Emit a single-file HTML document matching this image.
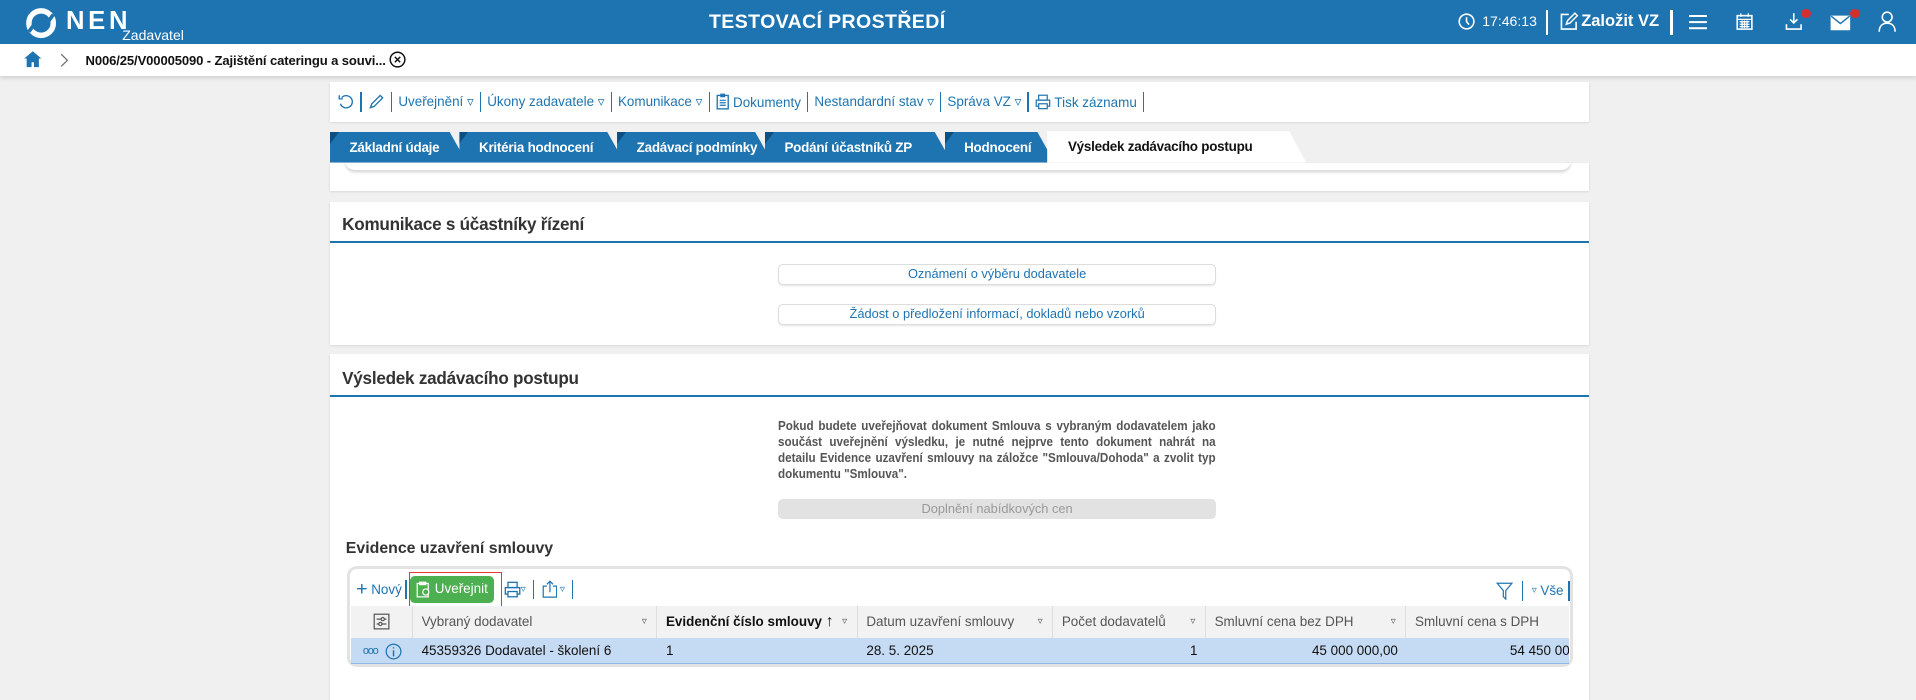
<!DOCTYPE html>
<html><head><meta charset="utf-8"><style>
*{box-sizing:border-box;margin:0;padding:0}
html,body{width:1916px;height:700px;overflow:hidden;background:#f0f0f0}
#w{zoom:1.22194;width:1568px;height:573px;position:relative;font-family:"Liberation Sans",sans-serif;color:#222}
.a{position:absolute}
.hdr{left:0;top:0;width:1568px;height:36px;background:#1e74b1;color:#fff}
.bc{left:0;top:36px;width:1568px;height:26px;background:#fff;box-shadow:0 2px 3px rgba(0,0,0,.12)}
.panel{background:#fff;box-shadow:0 1px 2px rgba(0,0,0,.12)}
.tb{font-size:11px;color:#1e74b1;display:flex;align-items:center;height:33px;padding-left:7px}
.tb .s{width:1px;height:16px;background:#1e74b1;margin:0 5px}
.tab{top:108px;height:25px;background:#1e74b1;color:#fff;font-size:11px;font-weight:bold;line-height:26px;padding-left:16px;clip-path:polygon(0 0,calc(100% - 14px) 0,100% 100%,0 100%);letter-spacing:-.2px}
.tab:before{content:"";position:absolute;left:0;top:0;border-top:10px solid #0d4f80;border-right:8px solid transparent}
.tab.act:before{display:none}
.h2{font-size:14px;font-weight:bold;color:#333;letter-spacing:-.2px}
.line{height:2px;background:#1e74b1}
.btn{left:637px;width:358px;height:17px;border:1px solid #ddd;border-radius:4px;background:#fff;color:#1e74b1;font-size:10.5px;text-align:center;line-height:15px;box-shadow:0 1px 1px rgba(0,0,0,.08)}
.th{top:496px;height:26px;background:#f2f2f2;font-size:11px;color:#555;line-height:26px;padding-left:7px;border-right:1px solid #ddd}
.td{top:522px;height:21px;font-size:11px;color:#111;line-height:22px;padding:0 7px}
.tri{position:absolute;right:8px;top:0;font-size:8px;color:#555}
</style></head><body><div id="w">
<div class="a hdr">
 <svg class="a" style="left:20px;top:5px" width="28" height="28" viewBox="0 0 28 28"><circle cx="14" cy="14" r="10" fill="none" stroke="#fff" stroke-width="4.5"/><path d="M4 21 L12 10 M24 7 L16 18" stroke="#1e74b1" stroke-width="3"/></svg>
 <div class="a" style="left:54px;top:6px;font-size:21px;font-weight:bold;letter-spacing:3px">NEN</div>
 <div class="a" style="left:100px;top:22px;font-size:11.5px">Zadavatel</div>
 <div class="a" style="left:0;width:1354px;top:9px;text-align:center;font-size:16px;font-weight:bold;letter-spacing:.3px">TESTOVACÍ PROSTŘEDÍ</div>
 <svg class="a" style="left:1193px;top:11px" width="14" height="14" viewBox="0 0 14 14"><circle cx="7" cy="7" r="6" fill="none" stroke="#fff" stroke-width="1.3"/><path d="M7 3.5V7l2 2.5" fill="none" stroke="#fff" stroke-width="1.3"/></svg>
 <div class="a" style="left:1213px;top:11px;font-size:11.5px">17:46:13</div>
 <div class="a" style="left:1265px;top:8px;width:2px;height:21px;background:#fff"></div>
 <svg class="a" style="left:1276px;top:10px" width="16" height="16" viewBox="0 0 16 16"><path d="M8 2H2v12h12V8" fill="none" stroke="#fff" stroke-width="1.3"/><path d="M6 10l1-3 6-6 2 2-6 6z" fill="none" stroke="#fff" stroke-width="1.2"/></svg>
 <div class="a" style="left:1294px;top:10px;font-size:13.5px;font-weight:bold">Založit VZ</div>
 <div class="a" style="left:1367px;top:8px;width:2px;height:21px;background:#fff"></div>
 <div class="a" style="left:1382px;top:12px;width:15px;height:2px;background:#fff;box-shadow:0 5px 0 #fff,0 10px 0 #fff"></div>
 <svg class="a" style="left:1421px;top:10px" width="14" height="15" viewBox="0 0 14 15"><rect x="1" y="3" width="12" height="11" fill="none" stroke="#fff" stroke-width="1.3"/><path d="M1 6h12M4 1v3M10 1v3M3 8h8M3 10h8M3 12h8M5 7v6M7 7v6M9 7v6" stroke="#fff" stroke-width="1"/></svg>
 <svg class="a" style="left:1460px;top:10px" width="16" height="16" viewBox="0 0 16 16"><path d="M8 1v8M5 6l3 3 3-3M2 10v4h12v-4" fill="none" stroke="#fff" stroke-width="1.3"/></svg>
 <div class="a" style="left:1474px;top:7px;width:8px;height:8px;border-radius:50%;background:#d32f2f"></div>
 <svg class="a" style="left:1498px;top:12px" width="17" height="13" viewBox="0 0 17 13"><rect x="0.5" y="0.5" width="16" height="12" fill="#fff"/><path d="M1 1l7.5 6L16 1" fill="none" stroke="#1e74b1" stroke-width="1.2"/></svg>
 <div class="a" style="left:1514px;top:7px;width:8px;height:8px;border-radius:50%;background:#d32f2f"></div>
 <svg class="a" style="left:1537px;top:9px" width="15" height="17" viewBox="0 0 15 17"><circle cx="7.5" cy="5" r="4" fill="none" stroke="#fff" stroke-width="1.3"/><path d="M1 17c0-5 3-7 6.5-7s6.5 2 6.5 7" fill="none" stroke="#fff" stroke-width="1.3"/></svg>
</div>
<div class="a bc">
 <svg class="a" style="left:19px;top:5px" width="16" height="15" viewBox="0 0 16 15"><path d="M8 1L1 7h2v7h4v-4h2v4h4V7h2z" fill="#1e74b1"/></svg>
 <svg class="a" style="left:49px;top:7px" width="7" height="12" viewBox="0 0 7 12"><path d="M1 1l5 5-5 5" fill="none" stroke="#777" stroke-width="1.1"/></svg>
 <div class="a" style="left:70px;top:7px;font-size:10.7px;font-weight:bold;color:#111;letter-spacing:-.1px">N006/25/V00005090 - Zajištění cateringu a souvi...</div>
 <svg class="a" style="left:318px;top:6px" width="14" height="14" viewBox="0 0 14 14"><circle cx="7" cy="7" r="6" fill="#fff" stroke="#111" stroke-width="1.2"/><path d="M4.8 4.8l4.4 4.4M9.2 4.8l-4.4 4.4" stroke="#111" stroke-width="1.2"/></svg>
</div>
<div class="a panel" style="left:270px;top:67px;width:1030px;height:33px">
 <div class="tb">
  <svg width="13" height="13" viewBox="0 0 13 13"><path d="M3 3a5 5 0 1 1-1 5" fill="none" stroke="#1e74b1" stroke-width="1.1"/><path d="M1 1v3h3" fill="none" stroke="#1e74b1" stroke-width="1.1"/></svg><span class="s"></span>
  <svg width="14" height="14" viewBox="0 0 14 14"><path d="M2 12l1-3 7-7 2 2-7 7z" fill="none" stroke="#1e74b1" stroke-width="1.1"/></svg><span class="s"></span>
  Uveřejnění ▿<span class="s"></span>Úkony zadavatele ▿<span class="s"></span>Komunikace ▿<span class="s"></span>
  <svg width="11" height="14" viewBox="0 0 11 14"><rect x="1" y="2" width="9" height="11" fill="none" stroke="#1e74b1" stroke-width="1.1"/><path d="M3 6h5M3 8h5M3 10h5M4 1h3v2H4z" stroke="#1e74b1" fill="none"/></svg>&nbsp;Dokumenty<span class="s"></span>Nestandardní stav ▿<span class="s"></span>Správa VZ ▿<span class="s"></span>
  <svg width="13" height="13" viewBox="0 0 13 13"><rect x="3" y="1" width="7" height="4" fill="none" stroke="#1e74b1"/><rect x="1" y="5" width="11" height="5" fill="none" stroke="#1e74b1"/><rect x="3" y="8" width="7" height="4" fill="#fff" stroke="#1e74b1"/></svg>&nbsp;Tisk záznamu<span class="s"></span>
 </div>
</div>
<div class="a panel" style="left:270px;top:133px;width:1030px;height:23px"><div class="a" style="left:12px;top:-2px;width:1004px;height:8px;border-radius:0 0 8px 8px;box-shadow:0 2px 2px rgba(0,0,0,.15)"></div></div>
<div class="a tab" style="left:270px;width:112px">Základní údaje</div>
<div class="a tab" style="left:376px;width:135px">Kritéria hodnocení</div>
<div class="a tab" style="left:505px;width:127px">Zadávací podmínky</div>
<div class="a tab" style="left:626px;width:153px">Podání účastníků ZP</div>
<div class="a tab" style="left:773px;width:90px">Hodnocení</div>
<div class="a tab act" style="left:857px;width:212px;background:#fff;color:#111;padding-left:17px;top:107px;height:26px">Výsledek zadávacího postupu</div>

<div class="a panel" style="left:270px;top:165px;width:1030px;height:117px">
 <div class="a h2" style="left:10px;top:11px">Komunikace s účastníky řízení</div>
 <div class="a line" style="left:0;top:32px;width:1030px"></div>
</div>
<div class="a btn" style="top:216px">Oznámení o výběru dodavatele</div>
<div class="a btn" style="top:249px">Žádost o předložení informací, dokladů nebo vzorků</div>

<div class="a panel" style="left:270px;top:290px;width:1030px;height:290px">
 <div class="a h2" style="left:10px;top:12px">Výsledek zadávacího postupu</div>
 <div class="a line" style="left:0;top:33px;width:1030px"></div>
</div>
<div class="a" style="left:637px;top:342px;width:394px;transform:scaleX(.909);transform-origin:0 0;font-size:10.5px;line-height:13.2px;color:#555;font-weight:bold;text-align:justify">Pokud budete uveřejňovat dokument Smlouva s vybraným dodavatelem jako součást uveřejnění výsledku, je nutné nejprve tento dokument nahrát na detailu Evidence uzavření smlouvy na záložce "Smlouva/Dohoda" a zvolit typ dokumentu "Smlouva".</div>
<div class="a" style="left:637px;top:408px;width:358px;height:17px;border-radius:4px;background:#e2e2e2;color:#999;font-size:10.5px;text-align:center;line-height:17px">Doplnění nabídkových cen</div>
<div class="a" style="left:283px;top:442px;font-size:13px;font-weight:bold;color:#333">Evidence uzavření smlouvy</div>

<div class="a" style="left:284px;top:463px;width:1003px;height:83px;border:3px solid #e3e3e3;border-radius:8px;background:#fff;overflow:hidden">
 <div class="a" style="left:5px;top:4px;font-size:11px;color:#1e74b1;display:flex;align-items:center;height:26px">
  <span style="font-size:16px;margin-right:3px">+</span>Nový<span style="width:1px;height:16px;background:#1e74b1;margin:0 3px"></span>
  <span style="background:#4caf50;color:#fff;border-radius:4px;height:22px;line-height:22px;padding:0 5px 0 20px;position:relative">Uveřejnit<svg style="position:absolute;left:5px;top:4px" width="12" height="14" viewBox="0 0 12 14"><rect x="1" y="2" width="9" height="11" fill="none" stroke="#fff"/><path d="M3 1h5v2H3z" fill="none" stroke="#fff"/><circle cx="8" cy="9" r="2.5" fill="#4caf50" stroke="#fff"/></svg></span>
  <svg style="margin-left:8px" width="14" height="14" viewBox="0 0 13 13"><rect x="3" y="1" width="7" height="4" fill="none" stroke="#1e74b1"/><rect x="1" y="5" width="11" height="5" fill="none" stroke="#1e74b1"/><rect x="3" y="8" width="7" height="4" fill="#fff" stroke="#1e74b1"/></svg><span style="font-size:8px">▿</span>
  <span style="width:1px;height:16px;background:#1e74b1;margin:0 6px"></span>
  <svg width="13" height="15" viewBox="0 0 13 15"><path d="M4 5H1v9h11V5H9M6.5 10V1M4 3.5l2.5-2.5 2.5 2.5" fill="none" stroke="#1e74b1"/></svg><span style="font-size:8px;margin-left:2px">▿</span>
  <span style="width:1px;height:16px;background:#1e74b1;margin:0 6px"></span>
 </div>
 <div class="a" style="left:48px;top:3px;width:76px;height:30px;border:1px solid #e53935"></div>
 <div class="a" style="right:0;top:8px;font-size:11px;color:#1e74b1;display:flex;align-items:center;height:20px">
  <svg width="14" height="15" viewBox="0 0 14 15"><path d="M1 1h12L8 7v7l-2-2V7z" fill="none" stroke="#1e74b1"/></svg>
  <span style="width:1px;height:16px;background:#1e74b1;margin:0 7px"></span><span style="font-size:8px">▿</span>&nbsp;Vše<span style="width:1px;height:16px;background:#1e74b1;margin-left:4px"></span>
 </div>
</div>
<div class="a th" style="left:287px;width:51px;padding:0"><svg style="position:absolute;left:18px;top:6px" width="14" height="14" viewBox="0 0 14 14"><rect x="1" y="1" width="12" height="12" fill="none" stroke="#555"/><path d="M3 5h8M3 9h8" stroke="#555"/><circle cx="8" cy="5" r="1.3" fill="#fff" stroke="#555"/><circle cx="6" cy="9" r="1.3" fill="#fff" stroke="#555"/></svg></div>
<div class="a th" style="left:338px;width:200px">Vybraný dodavatel<span class="tri">▿</span></div>
<div class="a th" style="left:538px;width:164px;color:#111;font-weight:bold">Evidenční číslo smlouvy <span style="font-weight:normal;font-size:13px">↑</span><span class="tri" style="font-weight:normal">▿</span></div>
<div class="a th" style="left:702px;width:160px">Datum uzavření smlouvy<span class="tri">▿</span></div>
<div class="a th" style="left:862px;width:125px">Počet dodavatelů<span class="tri">▿</span></div>
<div class="a th" style="left:987px;width:164px">Smluvní cena bez DPH<span class="tri">▿</span></div>
<div class="a th" style="left:1151px;width:133px;border:0">Smluvní cena s DPH</div>
<div class="a" style="left:287px;top:522px;width:997px;height:21px;background:#c5daf3;border-bottom:1px solid #8fb8e8"></div>
<div class="a td" style="left:290px;color:#1e74b1;font-size:9px;letter-spacing:-1px">ooo</div>
<svg class="a" style="left:315px;top:526px" width="14" height="14" viewBox="0 0 14 14"><circle cx="7" cy="7" r="6" fill="none" stroke="#1e74b1"/><path d="M7 6v5M7 3.5v1" stroke="#1e74b1" stroke-width="1.2"/></svg>
<div class="a td" style="left:338px">45359326 Dodavatel - školení 6</div>
<div class="a td" style="left:538px">1</div>
<div class="a td" style="left:702px">28. 5. 2025</div>
<div class="a td" style="left:862px;width:125px;text-align:right">1</div>
<div class="a td" style="left:987px;width:164px;text-align:right">45 000 000,00</div>
<div class="a td" style="left:1151px;width:133px;text-align:right;overflow:hidden;white-space:nowrap;padding-right:0"><span style="position:relative;left:22px">54 450 000,00</span></div>
</div></body></html>
